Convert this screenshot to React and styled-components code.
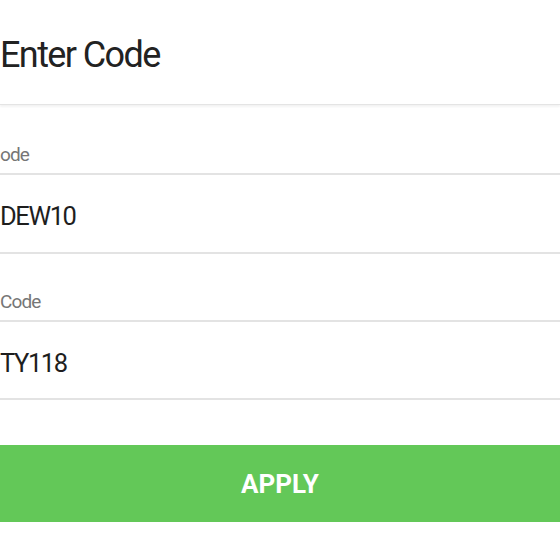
import React from 'react'
import styled, { createGlobalStyle } from 'styled-components'

const GlobalStyle = createGlobalStyle`
    html, body {
        margin: 0;
        padding: 0;
        background: #ffffff;
        overflow: hidden;
    }
    body {
        font-family: Roboto, "Noto Sans", sans-serif;
    }
`

const Page = styled.div`
    width: 560px;
    height: 560px;
    display: flex;
    flex-direction: column;
    background: #ffffff;
`

const Header = styled.div`
    height: 105px;
    padding-top: 5px;
    box-sizing: border-box;
    display: flex;
    align-items: center;
    border-bottom: 1px solid #e4e4e4;
    box-shadow: 0 2px 2px rgba(0, 0, 0, 0.05);
`

const Title = styled.h1`
    margin: 0;
    font-size: 36px;
    font-weight: 400;
    letter-spacing: -1.6px;
    color: #222222;
    line-height: 40px;
`

const Field = styled.div`
    display: flex;
    flex-direction: column;
`

const LabelRow = styled.div`
    height: ${({h}) => h}px;
    display: flex;
    align-items: flex-end;
    padding-bottom: 8px;
    box-sizing: border-box;
    border-bottom: 2px solid #e3e3e3;
`

const Label = styled.span`
    font-size: 19px;
    line-height: 20px;
    letter-spacing: -0.9px;
    color: #767676;
`

const ValueRow = styled.div`
    height: ${({h}) => h}px;
    display: flex;
    align-items: flex-start;
    padding-top: 26px;
    box-sizing: border-box;
    border-bottom: 2px solid #e3e3e3;
`

const Value = styled.span`
    font-size: 25.5px;
    line-height: 30px;
    letter-spacing: -1.4px;
    color: #1e1e1e;
`

const Apply = styled.button`
    margin-top: 45px;
    height: 77px;
    width: 100%;
    border: none;
    background: #63c858;
    color: #ffffff;
    font-family: Roboto, sans-serif;
    font-size: 26px;
    font-weight: 700;
    cursor: pointer;
`

export default function App() {
    const fields = [
        { label: 'ode', value: 'DEW10', labelH: 70, valueH: 79 },
        { label: 'Code', value: 'TY118', labelH: 68, valueH: 78 },
    ]
    return (
        <Page>
            <GlobalStyle />
            <Header>
                <Title>Enter Code</Title>
            </Header>
            {fields.map((f, i) => (
                <Field key={i}>
                    <LabelRow h={f.labelH}>
                        <Label>{f.label}</Label>
                    </LabelRow>
                    <ValueRow h={f.valueH}>
                        <Value>{f.value}</Value>
                    </ValueRow>
                </Field>
            ))}
            <Apply>APPLY</Apply>
        </Page>
    )
}
